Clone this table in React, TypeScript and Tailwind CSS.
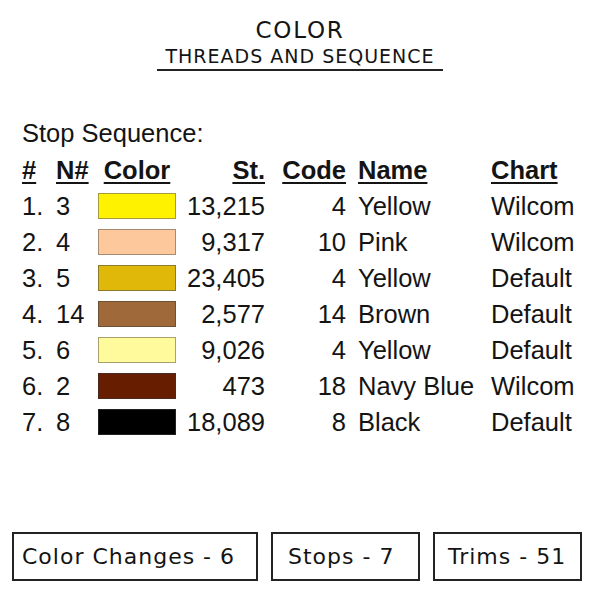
import React from 'react';

const rows = [
  { n: '1.', id: '3', fill: '#fff200', edge: '#a89a3a', st: '13,215', code: '4', name: 'Yellow', chart: 'Wilcom' },
  { n: '2.', id: '4', fill: '#fdc89c', edge: '#a88a70', st: '9,317', code: '10', name: 'Pink', chart: 'Wilcom' },
  { n: '3.', id: '5', fill: '#dfb80a', edge: '#8c7a30', st: '23,405', code: '4', name: 'Yellow', chart: 'Default' },
  { n: '4.', id: '14', fill: '#a0693a', edge: '#6e5038', st: '2,577', code: '14', name: 'Brown', chart: 'Default' },
  { n: '5.', id: '6', fill: '#fffa9c', edge: '#a8a070', st: '9,026', code: '4', name: 'Yellow', chart: 'Default' },
  { n: '6.', id: '2', fill: '#671d00', edge: '#4a2a20', st: '473', code: '18', name: 'Navy Blue', chart: 'Wilcom' },
  { n: '7.', id: '8', fill: '#000000', edge: '#222222', st: '18,089', code: '8', name: 'Black', chart: 'Default' },
];

const cols = 'grid grid-cols-[34px_42px_78px_89px_81px_145px_1fr] items-center';

const App = () => {
  return (
    <div className="w-[600px] h-[600px] bg-white text-[#141414] relative overflow-hidden">
      <div className="flex flex-col items-center pt-[16px] font-['DejaVu_Sans',sans-serif]">
        <div className="text-[23px] leading-[28px] tracking-[1.8px]">COLOR</div>
        <div className="text-[19px] leading-[24px] w-[286px] text-center border-b-2 border-[#222] pb-[1px] tracking-[1px]">
          THREADS AND SEQUENCE
        </div>
      </div>

      <div className="pl-[22px] pt-[44px] font-['Liberation_Sans',Arial,sans-serif] text-[25.5px]">
        <div className="leading-[36px]">Stop Sequence:</div>
        <div className={`${cols} h-[37px] font-bold leading-[30px]`}>
          <span className="underline underline-offset-[3px] decoration-2">#</span>
          <span className="underline underline-offset-[3px] decoration-2">N#</span>
          <span className="text-center underline underline-offset-[3px] decoration-2">Color</span>
          <span className="text-right underline underline-offset-[3px] decoration-2">St.</span>
          <span className="text-right underline underline-offset-[3px] decoration-2">Code</span>
          <span className="pl-[12px] underline underline-offset-[3px] decoration-2">Name</span>
          <span className="underline underline-offset-[3px] decoration-2">Chart</span>
        </div>
        {rows.map((r, i) => (
          <div key={i} className={`${cols} h-[36px] leading-[30px]`}>
            <span>{r.n}</span>
            <span>{r.id}</span>
            <span className="h-[26px] border-[1.5px]" style={{ backgroundColor: r.fill, borderColor: r.edge }} />
            <span className="text-right">{r.st}</span>
            <span className="text-right">{r.code}</span>
            <span className="pl-[12px] whitespace-nowrap">{r.name}</span>
            <span>{r.chart}</span>
          </div>
        ))}
      </div>

      <div className="absolute left-[12px] top-[532px] flex gap-[13px] font-['DejaVu_Sans',sans-serif] text-[22px] tracking-[1px]">
        <div className="w-[246px] h-[49px] border-2 border-[#222] flex items-center pl-[8px]">Color Changes - 6</div>
        <div className="w-[149px] h-[49px] border-2 border-[#222] flex items-center pl-[15px]">Stops - 7</div>
        <div className="w-[149px] h-[49px] border-2 border-[#222] flex items-center pl-[13px]">Trims - 51</div>
      </div>
    </div>
  );
};

export default App;
